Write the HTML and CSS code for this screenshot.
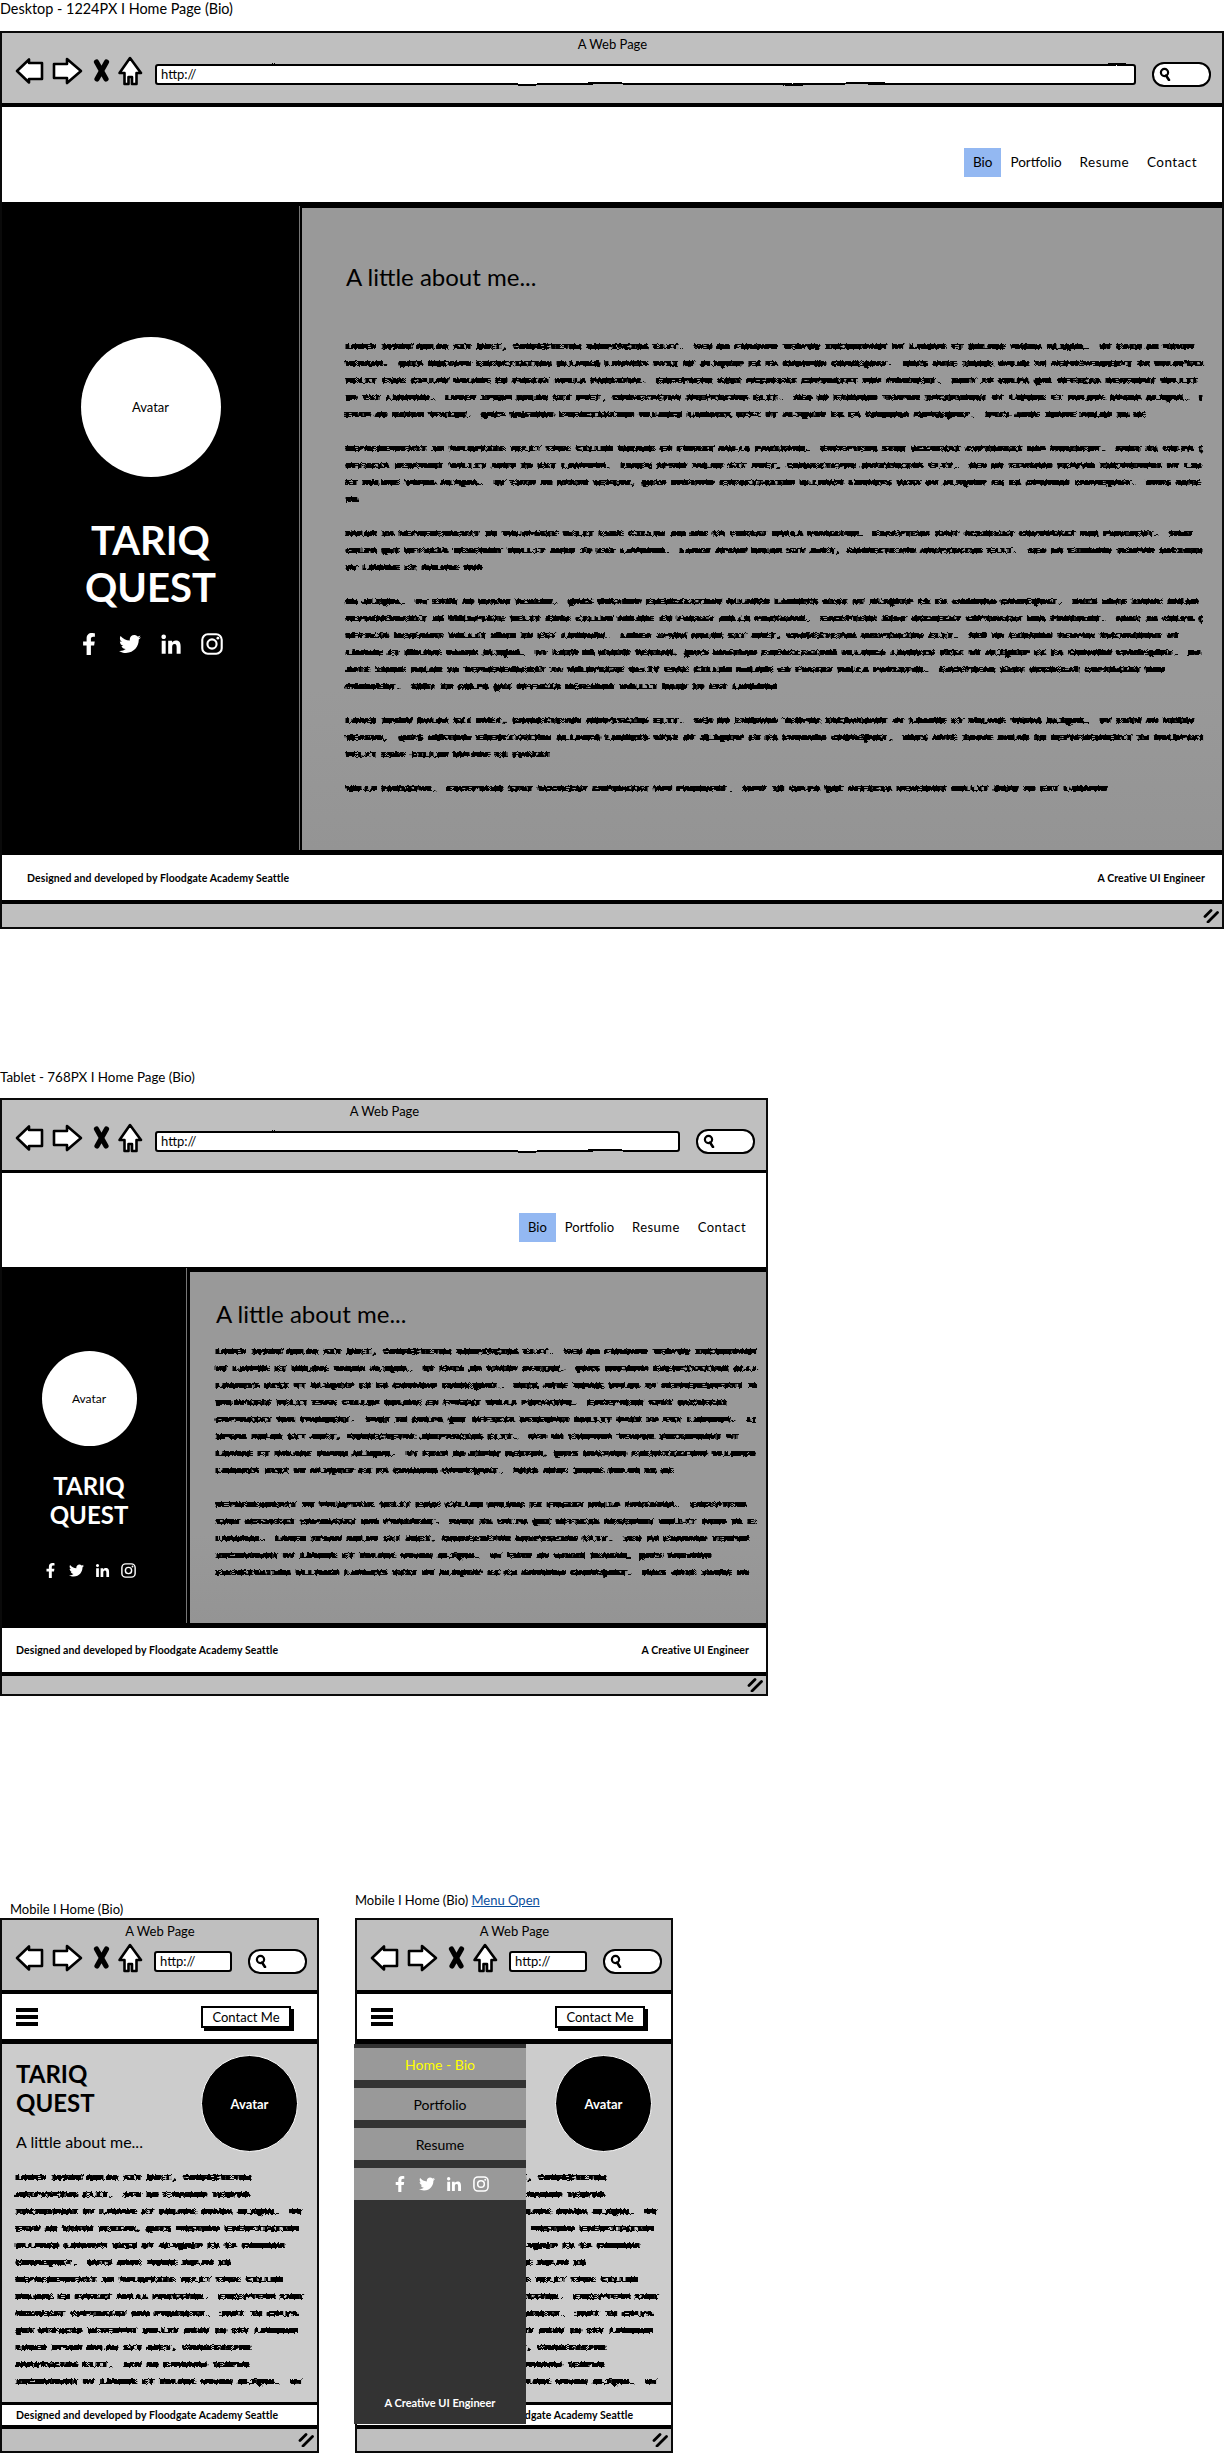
FILE: index.html
```html
<!DOCTYPE html>
<html lang="en">
<head>
<meta charset="utf-8">
<title>Wireframes - Home Page (Bio)</title>
<link rel="stylesheet" href="styles.css">
</head>
<body>
<svg class="defs" aria-hidden="true">
  <defs>
    <filter id="scribble" x="-2%" y="-2%" width="104%" height="104%" color-interpolation-filters="sRGB">
      <feMorphology in="SourceGraphic" operator="dilate" radius="0.8 0" result="fat"/>
      <feGaussianBlur in="fat" stdDeviation="0.9 0.3" result="soft"/>
      <feComponentTransfer in="soft" result="solid">
        <feFuncA type="linear" slope="7" intercept="-2.2"/>
      </feComponentTransfer>
      <feTurbulence type="fractalNoise" baseFrequency="0.6 0.12" numOctaves="1" seed="4" result="noise"/>
      <feDisplacementMap in="solid" in2="noise" scale="4" xChannelSelector="R" yChannelSelector="G" result="wavy"/>
      <feGaussianBlur in="wavy" stdDeviation="0.3"/>
    </filter>
    <filter id="wobble" x="-3%" y="-20%" width="106%" height="140%" color-interpolation-filters="sRGB">
      <feTurbulence type="fractalNoise" baseFrequency="0.012 0.04" numOctaves="2" seed="7" result="noise"/>
      <feDisplacementMap in="SourceGraphic" in2="noise" scale="2.2" xChannelSelector="R" yChannelSelector="G"/>
    </filter>
    <symbol id="nav-icons" viewBox="0 0 130 30">
      <g fill="#fff" stroke="#000" stroke-width="2.6" stroke-linejoin="round">
        <path d="M3 15 15 3.500V7H28V23H15V26.500Z"/>
        <path d="M40 8H53V3L67 15 53 27V22H40Z"/>
        <path d="M116 2 105.500 17H110.500V28H114.500V21H118V28H122.500V17H127Z"/>
      </g>
      <path d="M82.500 6 92 23M92.500 6 83 23" fill="none" stroke="#000" stroke-width="5.200" stroke-linecap="round"/>
    </symbol>
    <symbol id="mag" viewBox="0 0 12 14">
      <circle cx="5.500" cy="5.500" r="3.600" fill="none" stroke="#000" stroke-width="2.200"/>
      <path d="M7 8.500 10 13" stroke="#000" stroke-width="2.600" stroke-linecap="round"/>
    </symbol>
    <symbol id="grip" viewBox="0 0 16 14">
      <path d="M2 7.500 8 1.500M5 13 14.500 3.500" stroke="#000" stroke-width="2.800" stroke-linecap="round"/>
    </symbol>
    <symbol id="burger" viewBox="0 0 22 18">
      <path d="M0 0H22V4H0ZM0 7H22V11H0ZM0 14H22V18H0Z" fill="#000"/>
    </symbol>
    <symbol id="fb" viewBox="-96 0 512 512">
      <path fill="currentColor" d="M279.14 288l14.22-92.66h-88.91v-60.13c0-25.35 12.42-50.06 52.24-50.06h40.42V6.26S260.43 0 225.36 0c-73.22 0-121.08 44.38-121.08 124.72v70.62H22.89V288h81.39v224h100.17V288z"/>
    </symbol>
    <symbol id="tw" viewBox="0 0 512 512">
      <path fill="currentColor" d="M459.37 151.716c.325 4.548.325 9.097.325 13.645 0 138.72-105.583 298.558-298.558 298.558-59.452 0-114.68-17.219-161.137-47.106 8.447.974 16.568 1.299 25.34 1.299 49.055 0 94.213-16.568 130.274-44.832-46.132-.975-84.792-31.188-98.112-72.772 6.498.974 12.995 1.624 19.818 1.624 9.421 0 18.843-1.3 27.614-3.573-48.081-9.747-84.143-51.98-84.143-102.985v-1.299c13.969 7.797 30.214 12.67 47.431 13.319-28.264-18.843-46.781-51.005-46.781-87.391 0-19.492 5.197-37.36 14.294-52.954 51.655 63.675 129.3 105.258 216.365 109.807-1.624-7.797-2.599-15.918-2.599-24.04 0-57.828 46.782-104.934 104.934-104.934 30.213 0 57.502 12.67 76.67 33.137 23.715-4.548 46.456-13.32 66.599-25.34-7.798 24.366-24.366 44.833-46.132 57.827 21.117-2.273 41.584-8.122 60.426-16.243-14.292 20.791-32.161 39.308-52.628 54.253z"/>
    </symbol>
    <symbol id="li" viewBox="-32 0 512 512">
      <path fill="currentColor" d="M100.28 480H7.400V180.900h92.880zM53.790 140.100C24.090 140.100 0 115.500 0 85.800a53.790 53.790 0 0 1 107.580 0c0 29.700-24.100 54.300-53.790 54.300zM447.900 480h-92.680V334.400c0-34.700-.7-79.200-48.290-79.200-48.290 0-55.690 37.700-55.690 76.700V480h-92.780V180.900h89.080v40.800h1.300c12.400-23.500 42.690-48.300 87.880-48.300 94 0 111.280 61.900 111.280 142.300V480z"/>
    </symbol>
    <symbol id="ig" viewBox="0 0 24 24">
      <g fill="none" stroke="currentColor" stroke-width="2.300">
        <rect x="1.400" y="1.400" width="21.200" height="21.200" rx="6"/>
        <circle cx="12" cy="12" r="5"/>
      </g>
      <circle cx="18.400" cy="5.600" r="1.500" fill="currentColor"/>
    </symbol>
  </defs>
</svg>

<section class="mock mock-desktop">
  <div class="label">Desktop - 1224PX I Home Page (Bio)</div>
  <div class="frame">
    <div class="toolbar">
      <div class="title">A Web Page</div>
      <div class="toolrow">
        <svg class="nav-icons"><use href="#nav-icons"/></svg>
        <div class="url">http://</div>
        <div class="pill"><svg class="mag"><use href="#mag"/></svg></div>
      </div>
    </div>
    <nav class="nav">
      <a class="link active">Bio</a><a class="link">Portfolio</a><a class="link">Resume</a><a class="link">Contact</a>
    </nav>
    <div class="main">
      <aside class="side">
        <div class="avatar">Avatar</div>
        <div class="name">TARIQ<br>QUEST</div>
        <div class="social">
          <svg class="soc"><use href="#fb"/></svg><svg class="soc"><use href="#tw"/></svg><svg class="soc"><use href="#li"/></svg><svg class="soc"><use href="#ig"/></svg>
        </div>
      </aside>
      <article class="content">
        <h2 class="about">A little about me...</h2>
        <div class="scribble">
<p>Lorem ipsum dolor sit amet, consectetur adipiscing elit.  Sed do eiusmod tempor incididunt ut labore et dolore magna aliqua.  Ut enim ad minim
veniam,  quis nostrud exercitation ullamco laboris nisi ut aliquip ex ea commodo consequat.  Duis aute irure dolor in reprehenderit in voluptate
velit esse cillum dolore eu fugiat nulla pariatur.  Excepteur sint occaecat cupidatat non proident.  Sunt in culpa qui officia deserunt mollit
id est laborum.  Lorem ipsum dolor sit amet, consectetur adipiscing elit.  Sed do eiusmod tempor incididunt ut labore et dolore magna aliqua.  Ut
enim ad minim veniam.  quis nostrud exercitation ullamco laboris nisi ut aliquip ex ea commodo consequat.  Duis aute irure dolor in re</p>
<p>reprehenderit in voluptate velit esse cillum dolore eu fugiat nulla pariatur.  Excepteur sint occaecat cupidatat non proident.  Sunt in culpa qui
officia deserunt mollit anim id est laborum.  Lorem ipsum dolor sit amet, consectetur adipiscing elit.  Sed do eiusmod tempor incididunt ut labore
et dolore magna aliqua.  Ut enim ad minim veniam, quis nostrud exercitation ullamco laboris nisi ut aliquip ex ea commodo consequat.  Duis aute irure
in</p>
<p>dolor in reprehenderit in voluptate velit esse cillum dolore eu fugiat nulla pariatur.  Excepteur sint occaecat cupidatat non proident.  Sunt
culpa qui officia deserunt mollit anim id est laborum.  Lorem ipsum dolor sit amet, consectetur adipiscing elit.  Sed do eiusmod tempor incididunt
ut labore et dolore mag</p>
<p>na aliqua.  Ut enim ad minim veniam.  quis nostrud exercitation ullamco laboris nisi ut aliquip ex ea commodo consequat.  Duis aute irure dolor in
reprehenderit in voluptate velit esse cillum dolore eu fugiat nulla pariatur.  Excepteur sint occaecat cupidatat non proident.  Sunt in culpa qui
officia deserunt mollit anim id est laborum.  Lorem ipsum dolor sit amet, consectetur adipiscing elit.  Sed do eiusmod tempor incididunt ut
labore et dolore magna aliqua.  Ut enim ad minim veniam, quis nostrud exercitation ullamco laboris nisi ut aliquip ex ea commodo consequat.  Duis
aute irure dolor in reprehenderit in voluptate velit esse cillum dolore eu fugiat nulla pariatur.  Excepteur sint occaecat cupidatat non
proident.  Sunt in culpa qui officia deserunt mollit anim id est laborum</p>
<p>Lorem ipsum dolor sit amet, consectetur adipiscing elit.  Sed do eiusmod tempor incididunt ut labore et dolore magna aliqua.  Ut enim ad minim
veniam,  quis nostrud exercitation ullamco laboris nisi ut aliquip ex ea commodo consequat.  Duis aute irure dolor in reprehenderit in voluptate
velit esse cillum dolore eu fugiat</p>
<p>nulla pariatur.  Excepteur sint occaecat cupidatat non proident.  Sunt in culpa qui officia deserunt mollit anim id est laborum</p>
        </div>
      </article>
    </div>
    <footer class="foot"><span>Designed and developed by Floodgate Academy Seattle</span><span>A Creative UI Engineer</span></footer>
    <div class="status"><svg class="grip"><use href="#grip"/></svg></div>
  </div>
</section>

<section class="mock mock-tablet">
  <div class="label">Tablet - 768PX I Home Page (Bio)</div>
  <div class="frame">
    <div class="toolbar">
      <div class="title">A Web Page</div>
      <div class="toolrow">
        <svg class="nav-icons"><use href="#nav-icons"/></svg>
        <div class="url">http://</div>
        <div class="pill"><svg class="mag"><use href="#mag"/></svg></div>
      </div>
    </div>
    <nav class="nav">
      <a class="link active">Bio</a><a class="link">Portfolio</a><a class="link">Resume</a><a class="link">Contact</a>
    </nav>
    <div class="main">
      <aside class="side">
        <div class="avatar">Avatar</div>
        <div class="name">TARIQ<br>QUEST</div>
        <div class="social">
          <svg class="soc"><use href="#fb"/></svg><svg class="soc"><use href="#tw"/></svg><svg class="soc"><use href="#li"/></svg><svg class="soc"><use href="#ig"/></svg>
        </div>
      </aside>
      <article class="content">
        <h2 class="about">A little about me...</h2>
        <div class="scribble">
<p>Lorem ipsum dolor sit amet, consectetur adipiscing elit.  Sed do eiusmod tempor incididunt
ut labore et dolore magna aliqua.  Ut enim ad minim veniam.  quis nostrud exercitation ullamco
laboris nisi ut aliquip ex ea commodo consequat.  Duis aute irure dolor in reprehenderit in
voluptate velit esse cillum dolore eu fugiat nulla pariatur.  Excepteur sint occaecat
cupidatat non proident.  Sunt in culpa qui officia deserunt mollit anim id est laborum.  Lorem
ipsum dolor sit amet, consectetur adipiscing elit.  Sed do eiusmod tempor incididunt ut
labore et dolore magna aliqua.  Ut enim ad minim veniam, quis nostrud exercitation ullamco
laboris nisi ut aliquip ex ea commodo consequat.  Duis aute irure dolor in re</p>
<p>reprehenderit in voluptate velit esse cillum dolore eu fugiat nulla pariatur.  Excepteur
sint occaecat cupidatat non proident.  Sunt in culpa qui officia deserunt mollit anim id est
laborum.  Lorem ipsum dolor sit amet, consectetur adipiscing elit.  Sed do eiusmod tempor
incididunt ut labore et dolore magna aliqua.  Ut enim ad minim veniam, quis nostrud
exercitation ullamco laboris nisi ut aliquip ex ea commodo consequat.  Duis aute irure do</p>
        </div>
      </article>
    </div>
    <footer class="foot"><span>Designed and developed by Floodgate Academy Seattle</span><span>A Creative UI Engineer</span></footer>
    <div class="status"><svg class="grip"><use href="#grip"/></svg></div>
  </div>
</section>

<section class="mock-row">
  <div class="mock mock-phone">
    <div class="label">Mobile I Home (Bio)</div>
    <div class="frame">
      <div class="toolbar">
        <div class="title">A Web Page</div>
        <div class="toolrow">
          <svg class="nav-icons"><use href="#nav-icons"/></svg>
          <div class="url">http://</div>
          <div class="pill"><svg class="mag"><use href="#mag"/></svg></div>
        </div>
      </div>
      <nav class="nav">
        <svg class="burger"><use href="#burger"/></svg>
        <button class="cta" type="button">Contact Me</button>
      </nav>
      <article class="content">
        <div class="intro">
          <div>
            <div class="name">TARIQ<br>QUEST</div>
            <h2 class="about">A little about me...</h2>
          </div>
          <div class="avatar">Avatar</div>
        </div>
        <div class="scribble">
<p>Lorem ipsum dolor sit amet, consectetur
adipiscing elit.  Sed do eiusmod tempor
incididunt ut labore et dolore magna aliqua.  Ut
enim ad minim veniam, quis nostrud exercitation
ullamco laboris nisi ut aliquip ex ea commodo
consequat.  Duis aute irure dolor in
reprehenderit in voluptate velit esse cillum
dolore eu fugiat nulla pariatur.  Excepteur sint
occaecat cupidatat non proident.  Sunt in culpa
qui officia deserunt mollit anim id est laborum
Lorem ipsum dolor sit amet, consectetur
adipiscing elit.  Sed do eiusmod tempor
incididunt ut labore et dolore magna aliqua.  Ut</p>
        </div>
      </article>
      <footer class="foot"><span>Designed and developed by Floodgate Academy Seattle</span></footer>
      <div class="status"><svg class="grip"><use href="#grip"/></svg></div>
    </div>
  </div>

  <div class="mock mock-phone mock-open">
    <div class="label">Mobile I Home (Bio) <a class="label-link">Menu Open</a></div>
    <div class="frame">
      <div class="toolbar">
        <div class="title">A Web Page</div>
        <div class="toolrow">
          <svg class="nav-icons"><use href="#nav-icons"/></svg>
          <div class="url">http://</div>
          <div class="pill"><svg class="mag"><use href="#mag"/></svg></div>
        </div>
      </div>
      <nav class="nav">
        <svg class="burger"><use href="#burger"/></svg>
        <button class="cta" type="button">Contact Me</button>
      </nav>
      <article class="content">
        <div class="intro">
          <div></div>
          <div class="avatar">Avatar</div>
        </div>
        <div class="scribble">
<p>Lorem ipsum dolor sit amet, consectetur
adipiscing elit.  Sed do eiusmod tempor
incididunt ut labore et dolore magna aliqua.  Ut
enim ad minim veniam, quis nostrud exercitation
ullamco laboris nisi ut aliquip ex ea commodo
consequat.  Duis aute irure dolor in
reprehenderit in voluptate velit esse cillum
dolore eu fugiat nulla pariatur.  Excepteur sint
occaecat cupidatat non proident.  Sunt in culpa
qui officia deserunt mollit anim id est laborum
Lorem ipsum dolor sit amet, consectetur
adipiscing elit.  Sed do eiusmod tempor
incididunt ut labore et dolore magna aliqua.  Ut</p>
        </div>
      </article>
      <footer class="foot"><span>Designed and developed by Floodgate Academy Seattle</span></footer>
      <div class="status"><svg class="grip"><use href="#grip"/></svg></div>
      <div class="menu">
        <a class="menu-item menu-current">Home - Bio</a>
        <a class="menu-item">Portfolio</a>
        <a class="menu-item">Resume</a>
        <div class="menu-item menu-social">
          <svg class="soc"><use href="#fb"/></svg><svg class="soc"><use href="#tw"/></svg><svg class="soc"><use href="#li"/></svg><svg class="soc"><use href="#ig"/></svg>
        </div>
        <div class="menu-tag">A Creative UI Engineer</div>
      </div>
    </div>
  </div>
</section>
</body>
</html>
```
FILE: styles.css
```css
* { box-sizing: border-box; }
html, body { margin: 0; padding: 0; background: #fff; }
body { width: 1224px; height: 2456px; overflow: hidden; font-family: Lato, "Noto Sans", sans-serif; color: #000; }
.defs { position: absolute; width: 0; height: 0; }

.label { height: 18px; line-height: 18px; font-size: 14.4px; white-space: nowrap; }
.label-link { color: #0b4f9e; text-decoration: underline; }

.frame { position: relative; display: flex; flex-direction: column; border: 2px solid #0a0a0a; background: #000; }

.toolbar { position: relative; z-index: 0; flex: none; height: 70px; background: #bfbfbf; padding: 2px 11px 0 12px; }
.title { height: 18px; line-height: 18px; font-size: 13px; text-align: center; }
.toolrow { display: flex; align-items: center; height: 30px; margin-top: 3px; }
.nav-icons { flex: none; width: 130px; height: 30px; }
.url { position: relative; flex: 1; height: 21px; margin: 7px 0 0 11px; padding-left: 6px; line-height: 21px; font-size: 13px; }
.url::before { content: ""; position: absolute; inset: 0; z-index: -1; background: #fff; background-clip: padding-box; border: 2.5px solid #000; border-radius: 3px; filter: url(#wobble); }
.pill { position: relative; flex: none; width: 59px; height: 25px; margin: 7px 0 0 16px; padding: 5px 0 0 7px; }
.pill::before { content: ""; position: absolute; inset: 0; z-index: -1; background: #fff; background-clip: padding-box; border: 2.5px solid #000; border-radius: 12px; filter: url(#wobble); }
.mag { display: block; width: 12px; height: 14px; }

.nav { position: relative; z-index: 0; display: flex; justify-content: flex-end; align-items: flex-end; flex: none; background: #fff; margin-top: 4px; padding: 0 16px 25px 0; }
.link { display: block; padding: 0 9px; height: 29px; line-height: 28px; font-size: 13.5px; }
.link:nth-child(n+3) { letter-spacing: .45px; }
.active { background: #93b8f2; }

.main { display: flex; flex: none; margin-top: 4px; }
.side { display: flex; flex-direction: column; align-items: center; flex: none; background: #000; color: #fff; border-right: 1px solid #777; }
.avatar { display: flex; align-items: center; justify-content: center; flex: none; border-radius: 50%; background: #fff; color: #000; font-size: 13px; }
.name { font-weight: 700; white-space: nowrap; }
.social { display: flex; }
.soc { display: block; flex: none; color: #fff; }

.content { flex: 1; background: linear-gradient(#999 75%, #949494); }
.about { margin: 0; font-weight: 400; white-space: nowrap; }

.scribble { overflow: hidden; color: #000; font: 700 8px/17px "Liberation Mono", monospace; letter-spacing: 1.5px; word-spacing: -1.9px; text-transform: uppercase; filter: url(#scribble); }
.scribble p { margin: 0 0 17px; white-space: pre; }

.foot { display: flex; align-items: center; justify-content: space-between; flex: none; background: #fff; font-size: 10.5px; font-weight: 700; letter-spacing: .08px; }
.status { display: flex; justify-content: flex-end; align-items: center; flex: none; background: #bfbfbf; margin-top: 4px; padding-right: 3px; }
.grip { width: 16px; height: 14px; }

/* Desktop */
.mock-desktop .frame { margin-top: 13px; width: 1224px; }
.mock-desktop .nav { height: 95px; }
.mock-desktop .main { height: 644px; }
.mock-desktop .side { width: 298px; padding-top: 131px; }
.mock-desktop .avatar { width: 140px; height: 140px; }
.mock-desktop .name { margin-top: 40px; font-size: 40px; line-height: 47px; text-align: center; }
.mock-desktop .social { margin-top: 22px; gap: 19px; }
.mock-desktop .soc { width: 22px; height: 22px; }
.mock-desktop .content { margin-left: 2px; border-top: 2px solid #000; padding: 54px 20px 0 44px; }
.mock-desktop .about { font-size: 24px; line-height: 30px; }
.mock-desktop .scribble { margin-top: 46px; width: 856px; }
.mock-desktop .foot { height: 45px; margin-top: 5px; padding: 0 17px 0 25px; }
.mock-desktop .status { height: 23px; }

/* Tablet */
.mock-tablet { margin-top: 139px; }
.mock-tablet .label { font-size: 13.4px; }
.mock-tablet .frame { margin-top: 12px; width: 768px; }
.mock-tablet .nav { height: 94px; margin-top: 3px; padding-right: 11px; }
.mock-tablet .link { font-size: 13px; }
.mock-tablet .main { height: 355px; margin-top: 1px; }
.mock-tablet .side { width: 185px; padding: 83px 10px 0 0; }
.mock-tablet .avatar { width: 95px; height: 95px; font-size: 12px; }
.mock-tablet .name { margin-top: 25px; font-size: 24px; line-height: 29px; text-align: center; }
.mock-tablet .social { margin-top: 34px; gap: 11px; }
.mock-tablet .soc { width: 15px; height: 15px; }
.mock-tablet .content { margin-left: 3px; border-top: 4px solid #000; padding: 27px 10px 0 26px; }
.mock-tablet .about { font-size: 24px; line-height: 30px; }
.mock-tablet .scribble { margin-top: 14px; width: 540px; }
.mock-tablet .foot { height: 44px; margin-top: 5px; padding: 0 17px 0 14px; }
.mock-tablet .status { height: 18px; }

/* Phones */
.mock-row { display: flex; align-items: flex-end; gap: 36px; margin-top: 195px; }
.mock-phone { width: 319px; }
.mock-phone .label { padding-left: 10px; font-size: 13px; }
.mock-open { width: 318px; }
.mock-open .label { padding-left: 0; margin-bottom: 9px; }
.mock-phone .frame { height: 535px; }
.mock-phone .url { flex: none; width: 78px; margin-left: 10px; }
.mock-phone .pill { margin-left: 16px; }
.mock-phone .nav { justify-content: space-between; align-items: center; height: 45px; padding: 0 26px 0 14px; }
.burger { flex: none; width: 22px; height: 18px; }
.cta { display: block; width: 90px; height: 22px; padding: 0; font: 400 13px/18px Lato, sans-serif; color: #000; background: #fff; border: 2px solid #000; box-shadow: 3px 3px 0 #000; }
.mock-phone .content { flex: none; height: 358px; margin-top: 5px; background: #ccc; padding: 15px 0 0 14px; }
.intro { display: flex; justify-content: space-between; height: 97px; padding-right: 19px; }
.mock-phone .name { font-size: 24px; line-height: 29px; font-weight: 700; }
.mock-phone .about { margin-top: 14px; font-size: 16px; line-height: 22px; }
.mock-phone .avatar { width: 97px; height: 97px; margin-top: -4px; background: #000; color: #fff; font-weight: 700; font-size: 13px; border: 1px solid #fff; }
.mock-phone .scribble { margin-top: 13px; }
.mock-phone .foot { height: 20px; margin-top: 3px; padding: 0 0 0 14px; }
.mock-phone .status { height: 22px; }

.menu { position: absolute; left: -3px; top: 124px; display: flex; flex-direction: column; width: 172px; height: 380px; padding-top: 4px; background: #333; }
.menu-item { display: flex; align-items: center; justify-content: center; flex: none; height: 32px; margin-bottom: 8px; background: #999; font-size: 14px; }
.menu-current { color: #ff0; }
.menu-social { gap: 11px; margin-bottom: 0; }
.menu-social .soc { width: 16px; height: 16px; }
.menu-tag { margin-top: auto; margin-bottom: 15px; text-align: center; color: #fff; font-size: 11px; font-weight: 700; }
```
